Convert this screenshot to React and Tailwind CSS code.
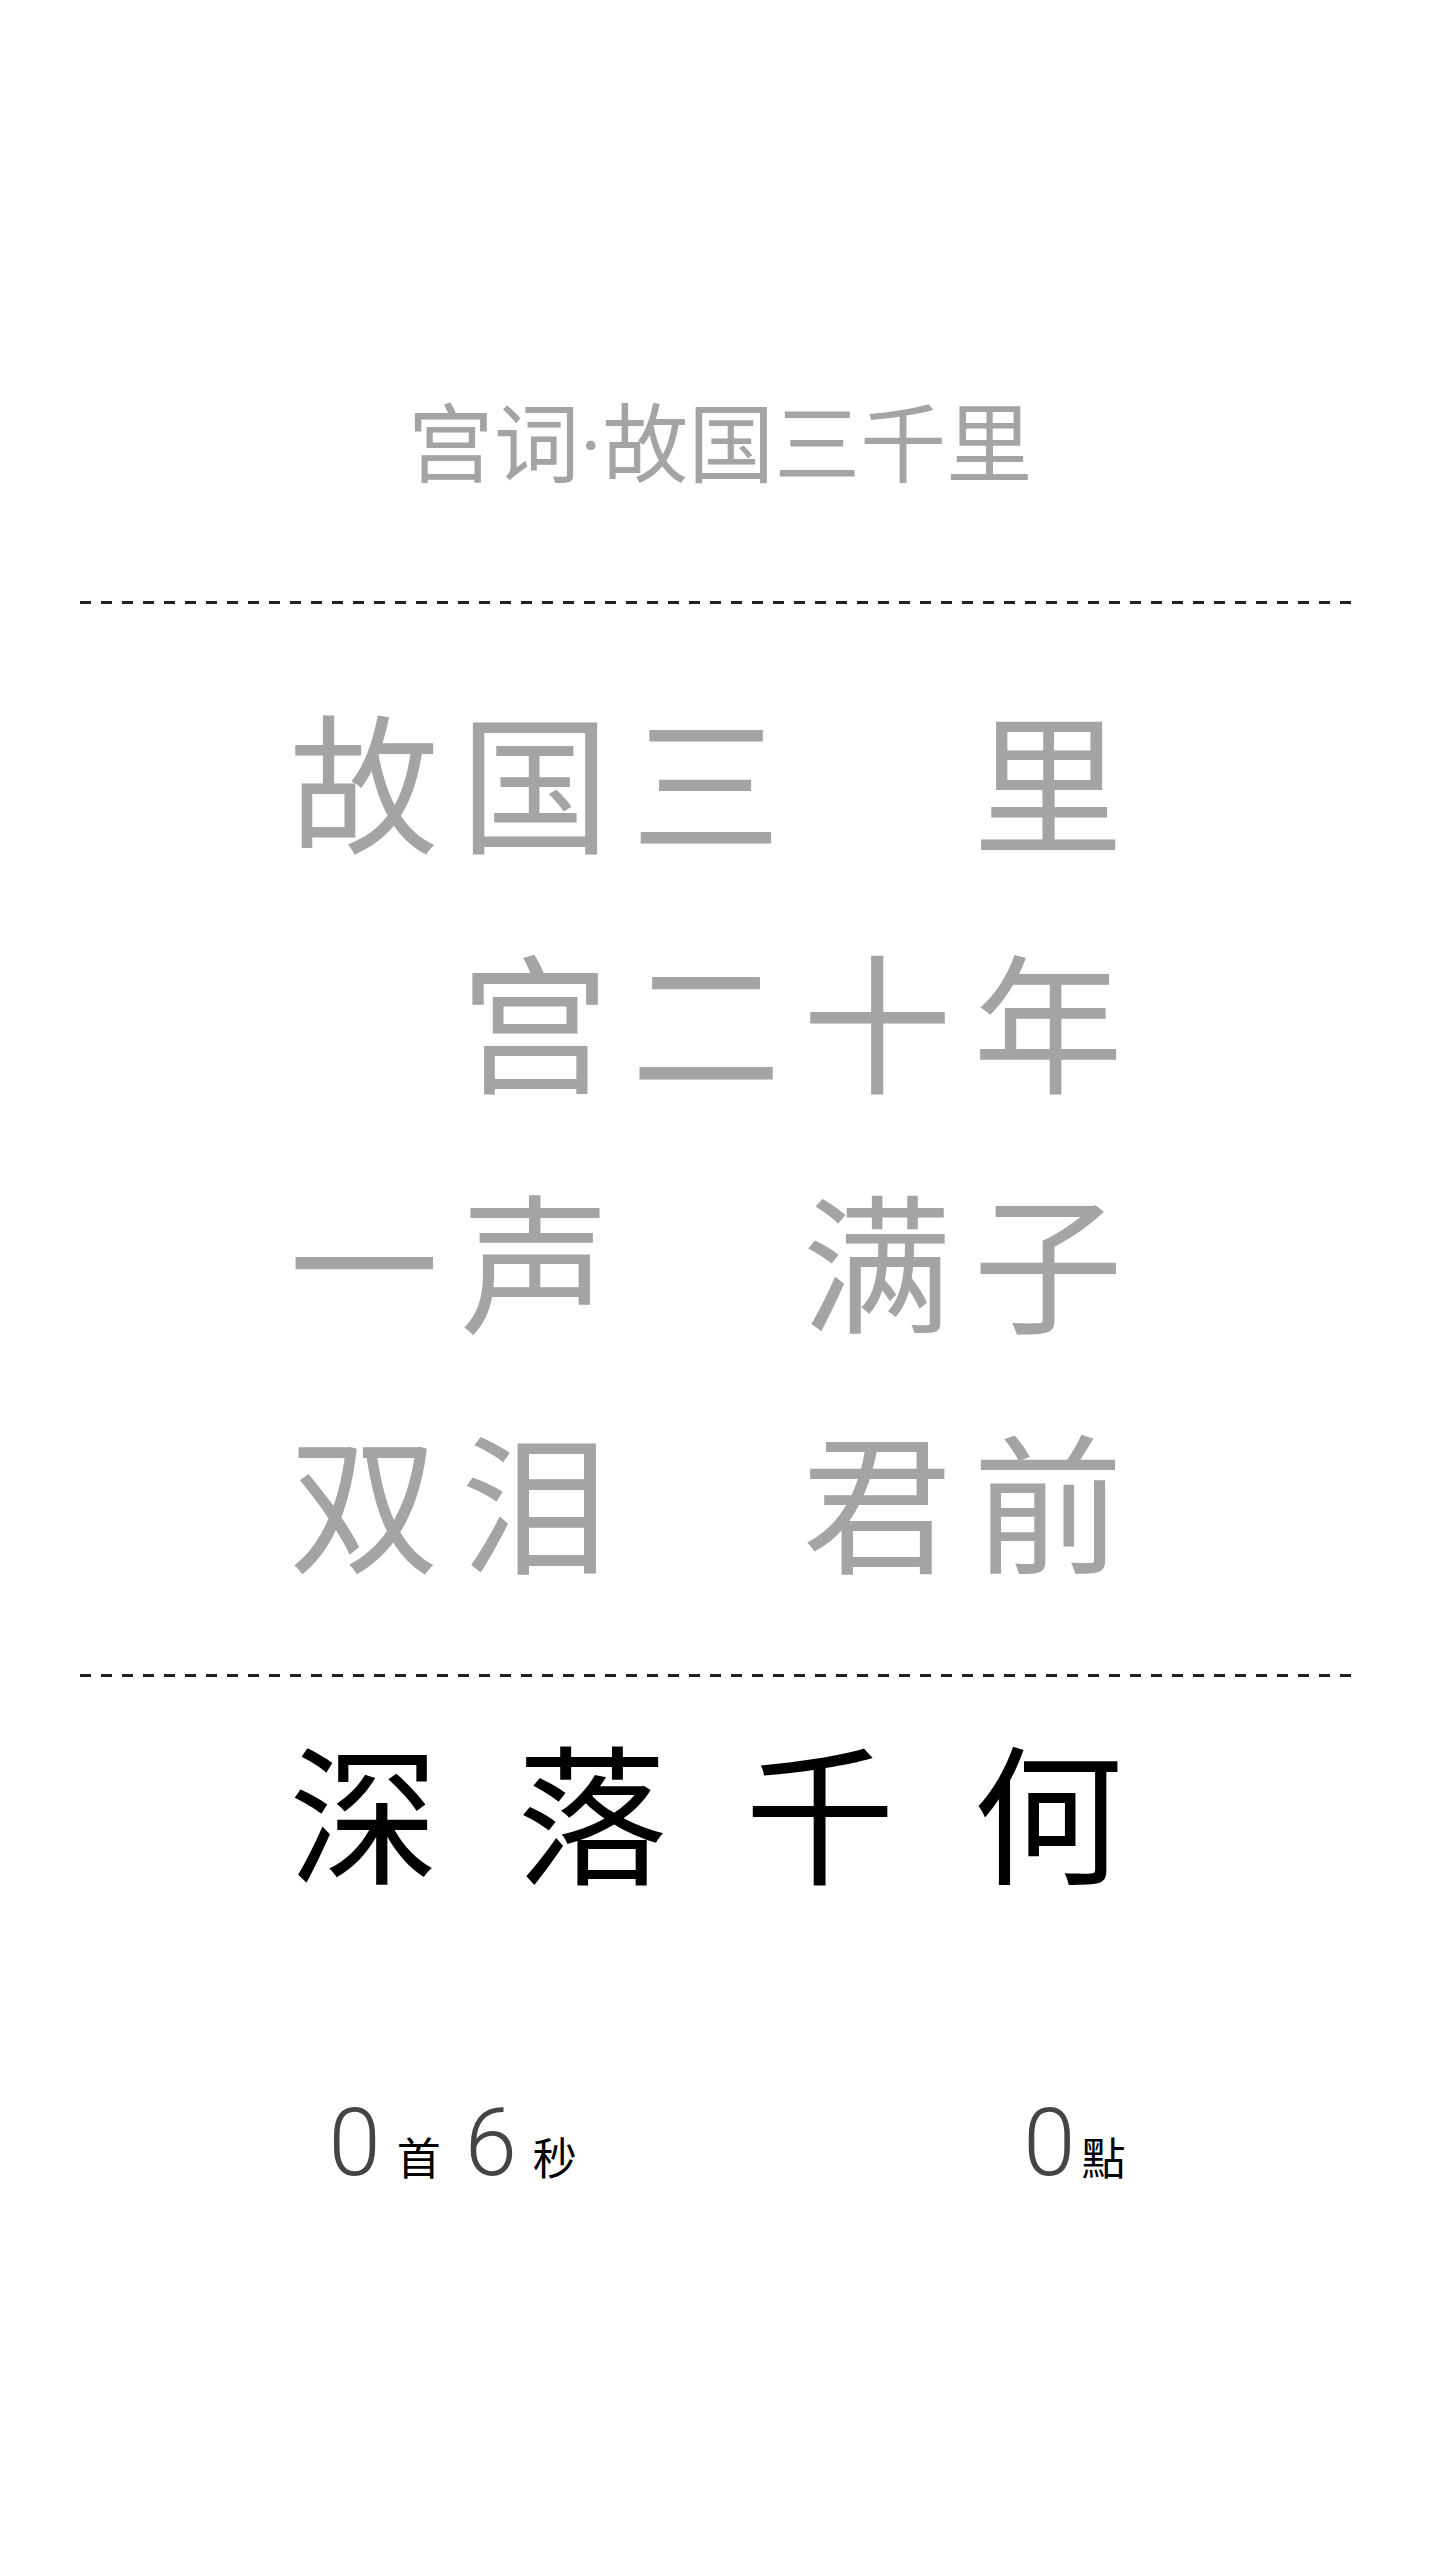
const grid = [
  ['故', '国', '三', '', '里'],
  ['', '宫', '二', '十', '年'],
  ['一', '声', '', '满', '子'],
  ['双', '泪', '', '君', '前'],
]

const answer = ['深', '落', '千', '何']

const cjk = { fontFamily: '"Noto Sans CJK SC", "Noto Sans", sans-serif' }
const num = { fontFamily: 'Roboto, "Liberation Sans", sans-serif' }

function Dashed() {
  return (
    <div className="w-full h-[3px] bg-[repeating-linear-gradient(90deg,#222_0_11px,transparent_11px_21px)]" />
  )
}

export default function App() {
  return (
    <div className="min-h-[2560px] bg-white flex flex-col items-center" style={cjk}>
      <div className="w-[1280px] flex flex-col items-center pt-[396px]">
        {/* title */}
        <h1 className="h-[86px] text-[86px] leading-none text-[#a4a4a4] whitespace-nowrap">
          宫词<span style={num}>·</span>故国三千里
        </h1>

        <div className="w-full mt-[119px]">
          <Dashed />
        </div>

        {/* poem board, blanks are the missing characters */}
        <div className="grid grid-cols-5 w-[855px] gap-y-[90px] mt-[98px] mr-[28px]">
          {grid.flat().map((ch, i) => (
            <div key={i} className="h-[150px] text-[150px] leading-none text-center text-[#a4a4a4]">
              {ch}
            </div>
          ))}
        </div>

        <div className="w-full mt-[102px]">
          <Dashed />
        </div>

        {/* candidate characters */}
        <div className="flex justify-between w-[855px] mt-[56px] mr-[28px]">
          {answer.map((ch) => (
            <span key={ch} className="w-[171px] text-center text-[150px] leading-none text-black">
              {ch}
            </span>
          ))}
        </div>

        {/* stats */}
        <div className="flex justify-between items-baseline w-[855px] mt-[213px] pl-[36px] pr-[22px]">
          <div className="flex items-baseline">
            <span className="text-[94px] font-light leading-none text-[#444]" style={num}>0</span>
            <span className="text-[44px] leading-none text-black ml-[16px]">首</span>
            <span className="text-[94px] font-light leading-none text-[#444] ml-[24px]" style={num}>6</span>
            <span className="text-[44px] leading-none text-black ml-[16px]">秒</span>
          </div>
          <div className="flex items-baseline">
            <span className="text-[94px] font-light leading-none text-[#444]" style={num}>0</span>
            <span className="text-[44px] leading-none text-black ml-[6px]" style={{ fontFamily: '"Noto Sans CJK TC", sans-serif' }}>點</span>
          </div>
        </div>
      </div>
    </div>
  )
}
